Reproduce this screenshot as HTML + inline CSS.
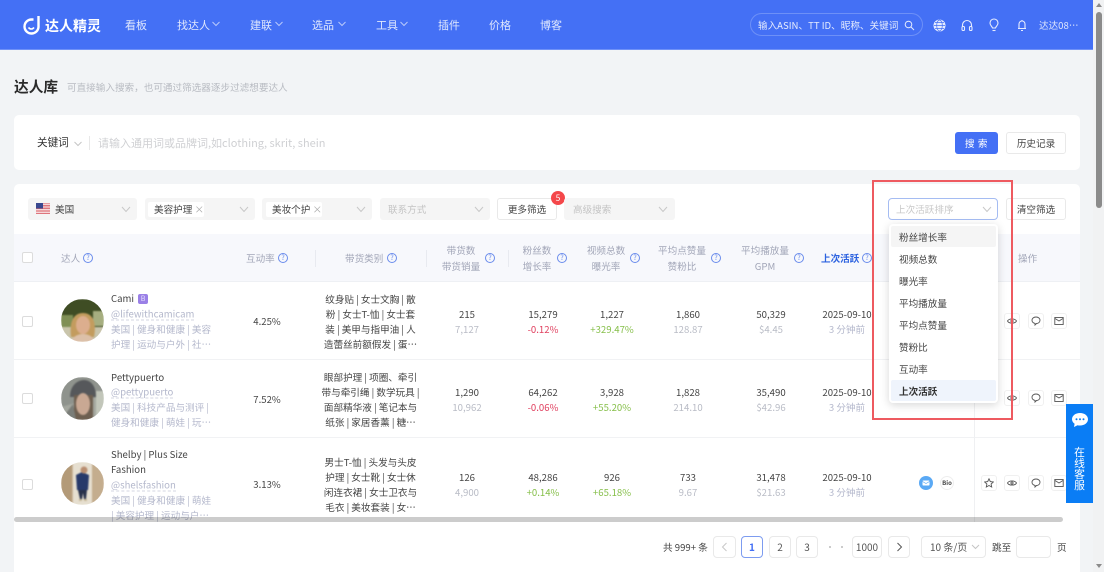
<!DOCTYPE html>
<html lang="zh-CN"><head><meta charset="utf-8"><title>达人库</title>
<style>
*{box-sizing:border-box}
html,body{margin:0;width:1104px;height:572px;overflow:hidden;background:#f2f4f6}
body{position:relative;font-family:"Noto Sans CJK SC","Liberation Sans",sans-serif;font-size:9.6px;color:#444;filter:blur(.3px)}
.b{position:absolute}
.l,.c{position:absolute;white-space:nowrap;line-height:14px;transform:translateY(-50%)}
.c{transform:translate(-50%,-50%)}
.nav{color:#dfe7fd;font-size:11px}
.g{color:#b9bcc6}.p{color:#b4b8cc}.h{color:#a2a6b8}.d{color:#444}
.r{color:#e0405f}.gr{color:#86bf4a}
.sel{position:absolute;top:198px;height:22px;background:#f5f5f5;border-radius:3px}
.btn{position:absolute;height:22px;background:#fff;border:1px solid #e9e9e9;border-radius:3px;text-align:center;line-height:20px;color:#444}
.tag{position:absolute;top:202px;height:15px;width:56px;background:#fff;border-radius:2px;line-height:15px;padding-left:6px;white-space:nowrap}
.tag i{font-style:normal;color:#aaa;margin-left:0}
.cb{position:absolute;width:11px;height:11px;background:#fff;border:1px solid #dcdcdc;border-radius:2px}
.av{position:absolute;left:61px;width:43px;height:43px;border-radius:50%;overflow:hidden}
.av svg{filter:blur(.7px)}
.dv{position:absolute;width:1px;top:250px;height:17px;background:#e8eaf0}
.q{position:absolute;width:10px;height:10px;border:1px solid #6a8cec;border-radius:50%;color:#6a8cec;font-size:7px;line-height:8px;text-align:center;top:253px}
.ab{position:absolute;width:16px;height:16px;background:#fff;border:1px solid #f0f0f0;border-radius:3px}
.ab svg{position:absolute;left:2px;top:2px;width:10px;height:10px;fill:none;stroke:#555;stroke-width:.9}
.pg{position:absolute;top:536px;height:22px;background:#fff;border:1px solid #e9e9e9;border-radius:4px;text-align:center;line-height:20px;font-size:10px;color:#555}
.it{position:absolute;left:899px;color:#444;transform:translateY(-50%);line-height:14px;white-space:nowrap}
svg{display:block}
</style></head><body>

<!-- header -->
<div class="b" style="left:0;top:0;width:1093px;height:50px;background:#4470f5;border-bottom:1px solid #6f91f7"></div>
<svg class="b" style="left:22px;top:14px" width="20" height="21" viewBox="0 0 20 21" fill="none" stroke="#fff" stroke-width="2.4"><path d="M16.5 2v11a7 7 0 1 1-7-7.5h2"/><path d="M6.5 13.5c1.5 2 4 2 5.5 0" stroke-width="1.6"/></svg>
<div class="l" style="left:45px;top:26px;font-size:14px;font-weight:700;color:#fff">达人精灵</div>
<div class="l nav" style="left:125px;top:25px">看板</div>
<div class="l nav" style="left:177px;top:25px">找达人</div>
<div class="l nav" style="left:250px;top:25px">建联</div>
<div class="l nav" style="left:312px;top:25px">选品</div>
<div class="l nav" style="left:376px;top:25px">工具</div>
<div class="l nav" style="left:438px;top:25px">插件</div>
<div class="l nav" style="left:489px;top:25px">价格</div>
<div class="l nav" style="left:540px;top:25px">博客</div>
<svg class="b" style="left:212px;top:21px" width="8" height="6" viewBox="0 0 8 6" fill="none" stroke="#b9c9fb"><path d="M.5 1L4 4.5 7.500 1"/></svg>
<svg class="b" style="left:275px;top:21px" width="8" height="6" viewBox="0 0 8 6" fill="none" stroke="#b9c9fb"><path d="M.5 1L4 4.5 7.500 1"/></svg>
<svg class="b" style="left:338px;top:21px" width="8" height="6" viewBox="0 0 8 6" fill="none" stroke="#b9c9fb"><path d="M.5 1L4 4.5 7.500 1"/></svg>
<svg class="b" style="left:400px;top:21px" width="8" height="6" viewBox="0 0 8 6" fill="none" stroke="#b9c9fb"><path d="M.5 1L4 4.5 7.500 1"/></svg>
<div class="b" style="left:750px;top:13px;width:173px;height:23px;border:1px solid #6d90f7;border-radius:12px"></div>
<div class="l" style="left:758px;top:25px;color:#e6ecfe">输入ASIN、TT ID、昵称、关键词</div>
<svg class="b" style="left:904px;top:20px" width="11" height="11" viewBox="0 0 11 11" fill="none" stroke="#e6ecfe"><circle cx="4.5" cy="4.5" r="3.3"/><path d="M7 7l3 3"/></svg>
<svg class="b" style="left:933px;top:19px" width="13" height="13" viewBox="0 0 13 13" fill="none" stroke="#4470f5" stroke-width=".7"><circle cx="6.5" cy="6.5" r="6" fill="#e6ecfe" stroke="none"/><ellipse cx="6.5" cy="6.5" rx="2.8" ry="5.5"/><path d="M1 6.5h11M2 3.5h9M2 9.5h9"/></svg>
<svg class="b" style="left:961px;top:19px" width="12" height="13" viewBox="0 0 12 13" fill="none" stroke="#e6ecfe" stroke-width="1.1"><path d="M1.5 8V6a4.500 4.500 0 0 1 9 0v2"/><rect x="1" y="7.5" width="2.5" height="4" rx="1"/><rect x="8.5" y="7.5" width="2.5" height="4" rx="1"/></svg>
<svg class="b" style="left:989px;top:18px" width="10" height="14" viewBox="0 0 10 14" fill="none" stroke="#e6ecfe" stroke-width="1.1"><path d="M3.5 10C3 8 1 7.500 1 5a4 4 0 0 1 8 0c0 2.500-2 3-2.500 5z"/><path d="M3.5 12.5h3"/></svg>
<svg class="b" style="left:1017px;top:19px" width="10" height="13" viewBox="0 0 10 13" fill="none" stroke="#e6ecfe" stroke-width="1.1"><path d="M2 9.500V5a3 3 0 0 1 6 0v4.500zM1 9.500h8M4 11.500h2M5 1v1"/></svg>
<div class="l" style="left:1039px;top:25px;color:#dfe7fd">达达08…</div>

<!-- page scrollbar -->
<div class="b" style="left:1093px;top:0;width:11px;height:572px;background:#f1f2f3"></div>
<div class="b" style="left:1096px;top:12px;width:6px;height:196px;background:#8b8b8b;border-radius:3px"></div>
<div class="b" style="left:1096px;top:3px;width:0;height:0;border:3px solid transparent;border-bottom:4px solid #8b8b8b;border-top:0"></div>
<div class="b" style="left:1096px;top:564px;width:0;height:0;border:3px solid transparent;border-top:4px solid #8b8b8b;border-bottom:0"></div>

<!-- title -->
<div class="l" style="left:14px;top:87px;font-size:14.7px;font-weight:700;color:#2b2b2b">达人库</div>
<div class="l" style="left:67px;top:87px;color:#b8bbc2">可直接输入搜索，也可通过筛选器逐步过滤想要达人</div>

<!-- search card -->
<div class="b" style="left:14px;top:115px;width:1066px;height:55px;background:#fff;border-radius:5px"></div>
<div class="l" style="left:37px;top:143px;font-size:10.6px;color:#333">关键词</div>
<svg class="b" style="left:74px;top:141px" width="8" height="6" viewBox="0 0 8 6" fill="none" stroke="#c5c5c5"><path d="M.5 1L4 4.5 7.500 1"/></svg>
<div class="b" style="left:89px;top:136px;width:1px;height:14px;background:#e8e8e8"></div>
<div class="l" style="left:98px;top:143px;font-size:11px;color:#cfd0d3">请输入通用词或品牌词,如clothing, skrit, shein</div>
<div class="b" style="left:955px;top:132px;width:43px;height:22px;background:#4470f5;border-radius:3px;color:#fff;text-align:center;line-height:22px;letter-spacing:.6px">搜 索</div>
<div class="btn" style="left:1006px;top:132px;width:60px">历史记录</div>

<!-- table card -->
<div class="b" style="left:14px;top:184px;width:1066px;height:388px;background:#fff;border-radius:5px 5px 0 0"></div>

<!-- filters -->
<div class="sel" style="left:28px;width:109px"></div>
<svg class="b" style="left:36px;top:203px" width="14" height="11" viewBox="0 0 14 11"><rect width="14" height="11" fill="#fff"/><path d="M0 .8h14M0 2.400h14M0 4h14M0 5.600h14M0 7.200h14M0 8.800h14M0 10.400h14" stroke="#d9636b" stroke-width=".9"/><rect width="7" height="5.5" fill="#39488f"/></svg>
<div class="l" style="left:55px;top:209px;color:#444">美国</div>
<div class="sel" style="left:145px;width:110px"></div>
<div class="tag" style="left:148px">美容护理 <i>×</i></div>
<div class="sel" style="left:262px;width:110px"></div>
<div class="tag" style="left:266px">美妆个护 <i>×</i></div>
<div class="sel" style="left:380px;width:110px"></div>
<div class="l" style="left:388px;top:209px;color:#c4c4c4">联系方式</div>
<div class="btn" style="left:497px;top:198px;width:60px">更多筛选</div>
<div class="b" style="left:551px;top:191px;width:14px;height:14px;border-radius:50%;background:#f4474a;color:#fff;font-size:8.5px;line-height:14px;text-align:center">5</div>
<div class="sel" style="left:564px;width:111px"></div>
<div class="l" style="left:573px;top:209px;color:#c4c4c4">高级搜索</div>
<svg class="b" style="left:121px;top:206px" width="10" height="7" viewBox="0 0 10 7" fill="none" stroke="#c8c8c8"><path d="M1 1l4 4.500L9 1"/></svg>
<svg class="b" style="left:239px;top:206px" width="10" height="7" viewBox="0 0 10 7" fill="none" stroke="#c8c8c8"><path d="M1 1l4 4.500L9 1"/></svg>
<svg class="b" style="left:356px;top:206px" width="10" height="7" viewBox="0 0 10 7" fill="none" stroke="#c8c8c8"><path d="M1 1l4 4.500L9 1"/></svg>
<svg class="b" style="left:474px;top:206px" width="10" height="7" viewBox="0 0 10 7" fill="none" stroke="#c8c8c8"><path d="M1 1l4 4.500L9 1"/></svg>
<svg class="b" style="left:658px;top:206px" width="10" height="7" viewBox="0 0 10 7" fill="none" stroke="#c8c8c8"><path d="M1 1l4 4.500L9 1"/></svg>
<div class="btn" style="left:1006px;top:198px;width:60px">清空筛选</div>

<!-- table header -->
<div class="b" style="left:14px;top:234px;width:1066px;height:48px;background:#f7f8fc;border-bottom:1px solid #eef0f4"></div>
<div class="cb" style="left:22px;top:252px"></div>
<div class="l h" style="left:61px;top:258px">达人</div><div class="q" style="left:83px">?</div>
<div class="l h" style="left:246px;top:258px">互动率</div><div class="q" style="left:278px">?</div>
<div class="dv" style="left:315px"></div>
<div class="l h" style="left:345px;top:258px">带货类别</div><div class="q" style="left:387px">?</div>
<div class="dv" style="left:426px"></div>
<div class="c h" style="left:461px;top:250px">带货数</div><div class="c h" style="left:461px;top:266px">带货销量</div><div class="q" style="left:485px">?</div>
<div class="dv" style="left:508px"></div>
<div class="c h" style="left:537px;top:250px">粉丝数</div><div class="c h" style="left:537px;top:266px">增长率</div><div class="q" style="left:557px">?</div>
<div class="c h" style="left:606px;top:250px">视频总数</div><div class="c h" style="left:606px;top:266px">曝光率</div><div class="q" style="left:630px">?</div>
<div class="c h" style="left:682px;top:250px">平均点赞量</div><div class="c h" style="left:682px;top:266px">赞粉比</div><div class="q" style="left:711px">?</div>
<div class="c h" style="left:765px;top:250px">平均播放量</div><div class="c h" style="left:765px;top:266px">GPM</div><div class="q" style="left:794px">?</div>
<div class="l" style="left:821px;top:258px;color:#2c62e0;font-weight:700">上次活跃</div><div class="q" style="left:862px">?</div>
<div class="l h" style="left:1018px;top:258px">操作</div>

<!-- row lines -->
<div class="b" style="left:14px;top:359px;width:1066px;height:1px;background:#f1f2f4"></div>
<div class="b" style="left:14px;top:437px;width:1066px;height:1px;background:#f1f2f4"></div>
<div class="b" style="left:974px;top:282px;width:1px;height:240px;background:#eff0f2"></div>

<!-- row 1 -->
<div class="cb" style="left:22px;top:316px"></div>
<div class="av" style="top:299px"><svg width="43" height="43" viewBox="0 0 43 43"><rect width="43" height="43" fill="#3f4d24"/><rect x="0" y="16" width="12" height="12" fill="#7f8f55"/><rect x="32" y="12" width="11" height="15" fill="#a6ae80"/><rect x="0" y="28" width="43" height="15" fill="#c9c5ac"/><path d="M10 38c-2-16 3-24 12-24s14 8 11 24z" fill="#c39c5e"/><ellipse cx="22" cy="26" rx="7" ry="9" fill="#dcae8e"/><path d="M10 43c2-6 7-8 12-8s10 2 12 8z" fill="#dcc0a8"/></svg></div>
<div class="l d" style="left:111px;top:298px">Cami</div>
<div class="b" style="left:138px;top:294px;width:10px;height:10px;background:#9a80e6;border-radius:2px;color:#e9e2ff;font-size:7px;line-height:10px;text-align:center">B</div>
<div class="l p" style="left:111px;top:314px;border-bottom:1px dashed #d3d5e0;line-height:12px">@lifewithcamicam</div>
<div class="l p" style="left:111px;top:329px">美国 | 健身和健康 | 美容</div>
<div class="l p" style="left:111px;top:344px">护理 | 运动与户外 | 社…</div>
<div class="c d" style="left:267px;top:321px">4.25%</div>
<div class="c d" style="left:370.5px;top:298.5px">纹身贴 | 女士文胸 | 散</div>
<div class="c d" style="left:370.5px;top:314px">粉 | 女士T-恤 | 女士套</div>
<div class="c d" style="left:370.5px;top:329px">装 | 美甲与指甲油 | 人</div>
<div class="c d" style="left:370.5px;top:344px">造蕾丝前额假发 | 蛋…</div>
<div class="c d" style="left:467px;top:313.5px">215</div><div class="c g" style="left:467px;top:329px">7,127</div>
<div class="c d" style="left:543px;top:313.5px">15,279</div><div class="c r" style="left:543px;top:329px">-0.12%</div>
<div class="c d" style="left:612px;top:313.5px">1,227</div><div class="c gr" style="left:612px;top:329px">+329.47%</div>
<div class="c d" style="left:688px;top:313.5px">1,860</div><div class="c g" style="left:688px;top:329px">128.87</div>
<div class="c d" style="left:771px;top:313.5px">50,329</div><div class="c g" style="left:771px;top:329px">$4.45</div>
<div class="c d" style="left:847px;top:313.5px">2025-09-10</div><div class="c p" style="left:847px;top:329px">3 分钟前</div>

<!-- row 2 -->
<div class="cb" style="left:22px;top:393px"></div>
<div class="av" style="top:377px"><svg width="43" height="43" viewBox="0 0 43 43"><rect width="43" height="43" fill="#a4a79f"/><path d="M0 0h43v18L0 30z" fill="#8f938d"/><rect x="35" y="14" width="8" height="26" fill="#c2c6ba"/><path d="M9 20c0-12 8-17 14-17s12 5 12 17z" fill="#56585b"/><path d="M13 18h19v25H13z" fill="#6e5f50"/><ellipse cx="22" cy="27" rx="7" ry="11" fill="#c9a893"/><path d="M0 43l12-16 3 16z" fill="#7a7d78"/></svg></div>
<div class="l d" style="left:111px;top:376.5px">Pettypuerto</div>
<div class="l p" style="left:111px;top:392px;border-bottom:1px dashed #d3d5e0;line-height:12px">@pettypuerto</div>
<div class="l p" style="left:111px;top:407px">美国 | 科技产品与测评 |</div>
<div class="l p" style="left:111px;top:422px">健身和健康 | 萌娃 | 玩…</div>
<div class="c d" style="left:267px;top:399px">7.52%</div>
<div class="c d" style="left:370.5px;top:376.5px">眼部护理 | 项圈、牵引</div>
<div class="c d" style="left:370.5px;top:391.5px">带与牵引绳 | 数学玩具 |</div>
<div class="c d" style="left:370.5px;top:406.5px">面部精华液 | 笔记本与</div>
<div class="c d" style="left:370.5px;top:421.5px">纸张 | 家居香薰 | 糖…</div>
<div class="c d" style="left:467px;top:391.5px">1,290</div><div class="c g" style="left:467px;top:406.5px">10,962</div>
<div class="c d" style="left:543px;top:391.5px">64,262</div><div class="c r" style="left:543px;top:406.5px">-0.06%</div>
<div class="c d" style="left:612px;top:391.5px">3,928</div><div class="c gr" style="left:612px;top:406.5px">+55.20%</div>
<div class="c d" style="left:688px;top:391.5px">1,828</div><div class="c g" style="left:688px;top:406.5px">214.10</div>
<div class="c d" style="left:771px;top:391.5px">35,490</div><div class="c g" style="left:771px;top:406.5px">$42.96</div>
<div class="c d" style="left:847px;top:391.5px">2025-09-10</div><div class="c p" style="left:847px;top:406.5px">3 分钟前</div>

<!-- row 3 -->
<div class="cb" style="left:22px;top:479px"></div>
<div class="av" style="top:462px"><svg width="43" height="43" viewBox="0 0 43 43"><rect width="43" height="43" fill="#cdb89b"/><rect x="0" width="11" height="43" fill="#b39a78"/><rect x="31" width="12" height="43" fill="#c4ad8e"/><rect x="12" y="0" width="19" height="43" fill="#e6dfd0"/><path d="M15 13l6-3 7 3-1 15h-11z" fill="#27396a"/><circle cx="23" cy="8" r="3.5" fill="#b98e70"/><path d="M17 28h9l-1 9h-2l-1-6-1 6h-2z" fill="#27304a"/><path d="M18 37h3v2h-3zM23 37h3v2h-3z" fill="#c9bb9a"/></svg></div>
<div class="l d" style="left:111px;top:454px">Shelby | Plus Size</div>
<div class="l d" style="left:111px;top:469px">Fashion</div>
<div class="l p" style="left:111px;top:484.5px;border-bottom:1px dashed #d3d5e0;line-height:12px">@shelsfashion</div>
<div class="l p" style="left:111px;top:499.5px">美国 | 健身和健康 | 萌娃</div>
<div class="l p" style="left:111px;top:515px">| 美容护理 | 运动与户…</div>
<div class="c d" style="left:267px;top:484px">3.13%</div>
<div class="c d" style="left:370.5px;top:462px">男士T-恤 | 头发与头皮</div>
<div class="c d" style="left:370.5px;top:477px">护理 | 女士靴 | 女士休</div>
<div class="c d" style="left:370.5px;top:492px">闲连衣裙 | 女士卫衣与</div>
<div class="c d" style="left:370.5px;top:507px">毛衣 | 美妆套装 | 女…</div>
<div class="c d" style="left:467px;top:476.5px">126</div><div class="c g" style="left:467px;top:492px">4,900</div>
<div class="c d" style="left:543px;top:476.5px">48,286</div><div class="c gr" style="left:543px;top:492px">+0.14%</div>
<div class="c d" style="left:612px;top:476.5px">926</div><div class="c gr" style="left:612px;top:492px">+65.18%</div>
<div class="c d" style="left:688px;top:476.5px">733</div><div class="c g" style="left:688px;top:492px">9.67</div>
<div class="c d" style="left:771px;top:476.5px">31,478</div><div class="c g" style="left:771px;top:492px">$21.63</div>
<div class="c d" style="left:847px;top:476.5px">2025-09-10</div><div class="c p" style="left:847px;top:492px">3 分钟前</div>
<svg class="b" style="left:919px;top:476px" width="14" height="14" viewBox="0 0 14 14"><circle cx="7" cy="7" r="7" fill="#5aa9f5"/><rect x="3.5" y="4.5" width="7" height="5" rx=".8" fill="#fff"/><path d="M3.5 5.500L7 7.500l3.500-2" stroke="#5aa9f5" stroke-width=".7" fill="none"/></svg>
<div class="b" style="left:940px;top:476px;width:14px;height:14px;border-radius:50%;background:#fff;border:1px solid #eee;font-size:6px;line-height:12px;text-align:center;font-weight:700;color:#444">Bio</div>

<!-- actions -->
<div class="ab" style="left:981px;top:475px"><svg viewBox="0 0 10 10"><path d="M5 .8l1.300 2.800 3 .4-2.200 2 .6 3L5 7.500 2.300 9l.6-3L.7 4l3-.4z"/></svg></div>
<div class="ab" style="left:1004px;top:313px"><svg viewBox="0 0 10 10"><path d="M.5 5C2 2.200 8 2.200 9.500 5 8 7.800 2 7.800.5 5z"/><circle cx="5" cy="5" r="1.100"/></svg></div>
<div class="ab" style="left:1028px;top:313px"><svg viewBox="0 0 10 10"><path d="M5 1c2.500 0 4 1.500 4 3.300S7.500 7.500 5.500 7.500L4 9V7.400C2 7 1 5.800 1 4.300 1 2.500 2.500 1 5 1z"/></svg></div>
<div class="ab" style="left:1051px;top:313px"><svg viewBox="0 0 10 10"><rect x=".8" y="1.500" width="8.400" height="7"/><path d="M1 2.500l4 2.500 4-2.500"/></svg></div>
<div class="ab" style="left:1004px;top:390px"><svg viewBox="0 0 10 10"><path d="M.5 5C2 2.200 8 2.200 9.500 5 8 7.800 2 7.800.5 5z"/><circle cx="5" cy="5" r="1.100"/></svg></div>
<div class="ab" style="left:1028px;top:390px"><svg viewBox="0 0 10 10"><path d="M5 1c2.500 0 4 1.500 4 3.300S7.500 7.500 5.500 7.500L4 9V7.400C2 7 1 5.800 1 4.300 1 2.500 2.500 1 5 1z"/></svg></div>
<div class="ab" style="left:1051px;top:390px"><svg viewBox="0 0 10 10"><rect x=".8" y="1.500" width="8.400" height="7"/><path d="M1 2.500l4 2.500 4-2.500"/></svg></div>
<div class="ab" style="left:1004px;top:475px"><svg viewBox="0 0 10 10"><path d="M.5 5C2 2.200 8 2.200 9.500 5 8 7.800 2 7.800.5 5z"/><circle cx="5" cy="5" r="1.100"/></svg></div>
<div class="ab" style="left:1028px;top:475px"><svg viewBox="0 0 10 10"><path d="M5 1c2.500 0 4 1.500 4 3.300S7.500 7.500 5.500 7.500L4 9V7.400C2 7 1 5.800 1 4.300 1 2.500 2.500 1 5 1z"/></svg></div>
<div class="ab" style="left:1051px;top:475px"><svg viewBox="0 0 10 10"><rect x=".8" y="1.500" width="8.400" height="7"/><path d="M1 2.500l4 2.500 4-2.500"/></svg></div>

<!-- horizontal scrollbar -->
<div class="b" style="left:14px;top:517px;width:1049px;height:5px;background:rgba(0,0,0,.2);border-radius:3px"></div>

<!-- pagination -->
<div class="l d" style="left:663px;top:547px">共 999+ 条</div>
<div class="pg" style="left:713px;width:23px;color:#ccc"><svg style="margin:5px auto 0" width="7" height="10" viewBox="0 0 7 10" fill="none" stroke="#c8c8c8"><path d="M5.500 1L1.500 5l4 4"/></svg></div>
<div class="pg" style="left:741px;width:22px;border-color:#7d9cf0;color:#4470f5;font-weight:700">1</div>
<div class="pg" style="left:769px;width:22px">2</div>
<div class="pg" style="left:796px;width:22px">3</div>
<div class="b" style="left:829px;top:546px;width:2px;height:2px;background:#bbb;border-radius:50%"></div>
<div class="b" style="left:841px;top:546px;width:2px;height:2px;background:#bbb;border-radius:50%"></div>
<div class="pg" style="left:852px;width:30px">1000</div>
<div class="pg" style="left:888px;width:22px"><svg style="margin:5px auto 0" width="7" height="10" viewBox="0 0 7 10" fill="none" stroke="#555"><path d="M1.500 1l4 4-4 4"/></svg></div>
<div class="pg" style="left:921px;width:65px;text-align:left;padding-left:8px">10 条/页</div>
<svg class="b" style="left:971px;top:544px" width="9" height="6" viewBox="0 0 9 6" fill="none" stroke="#c5c5c5"><path d="M1 1l3.500 3.500L8 1"/></svg>
<div class="l d" style="left:992px;top:547px">跳至</div>
<div class="pg" style="left:1016px;width:35px"></div>
<div class="l d" style="left:1057px;top:547px">页</div>

<!-- dropdown -->
<div class="b" style="left:888px;top:198px;width:110px;height:22px;background:#fff;border:1px solid #a5bcf2;border-radius:4px"></div>
<div class="l" style="left:896px;top:209px;color:#c8c8c8">上次活跃排序</div>
<svg class="b" style="left:982px;top:206px" width="10" height="7" viewBox="0 0 10 7" fill="none" stroke="#c8c8c8"><path d="M1 1l4 4.500L9 1"/></svg>
<div class="b" style="left:889px;top:224px;width:109px;height:179px;background:#fff;border-radius:4px;box-shadow:0 2px 9px rgba(0,0,0,.16)"></div>
<div class="b" style="left:891px;top:226px;width:105px;height:21px;background:#f5f5f5;border-radius:2px"></div>
<div class="b" style="left:891px;top:380px;width:105px;height:21px;background:#eff4fc;border-radius:2px"></div>
<div class="it" style="top:236.5px">粉丝增长率</div>
<div class="it" style="top:258.5px">视频总数</div>
<div class="it" style="top:280.5px">曝光率</div>
<div class="it" style="top:302.5px">平均播放量</div>
<div class="it" style="top:324.5px">平均点赞量</div>
<div class="it" style="top:346.5px">赞粉比</div>
<div class="it" style="top:368.5px">互动率</div>
<div class="it" style="top:390.5px;font-weight:700;color:#333">上次活跃</div>

<!-- red annotation -->
<div class="b" style="left:872px;top:180px;width:141px;height:240px;border:2px solid #ee5a60"></div>

<!-- chat float -->
<div class="b" style="left:1066px;top:404px;width:27px;height:99px;background:#0a7df5"></div>
<svg class="b" style="left:1071px;top:412px" width="18" height="16" viewBox="0 0 18 16"><path d="M9 1c4.500 0 8 2.700 8 6.300s-3.500 6.200-8 6.200c-.9 0-1.700-.1-2.500-.3L3 15l.6-3.200C2 10.700 1 9.100 1 7.300 1 3.700 4.500 1 9 1z" fill="#fff"/><circle cx="5.5" cy="7.3" r="1" fill="#0a7df5"/><circle cx="9" cy="7.3" r="1" fill="#0a7df5"/><circle cx="12.5" cy="7.3" r="1" fill="#0a7df5"/></svg>
<div class="c" style="left:1079.5px;top:452px;color:#fff;font-size:10.8px">在</div>
<div class="c" style="left:1079.5px;top:463px;color:#fff;font-size:10.8px">线</div>
<div class="c" style="left:1079.5px;top:474px;color:#fff;font-size:10.8px">客</div>
<div class="c" style="left:1079.5px;top:485px;color:#fff;font-size:10.8px">服</div>

</body></html>
